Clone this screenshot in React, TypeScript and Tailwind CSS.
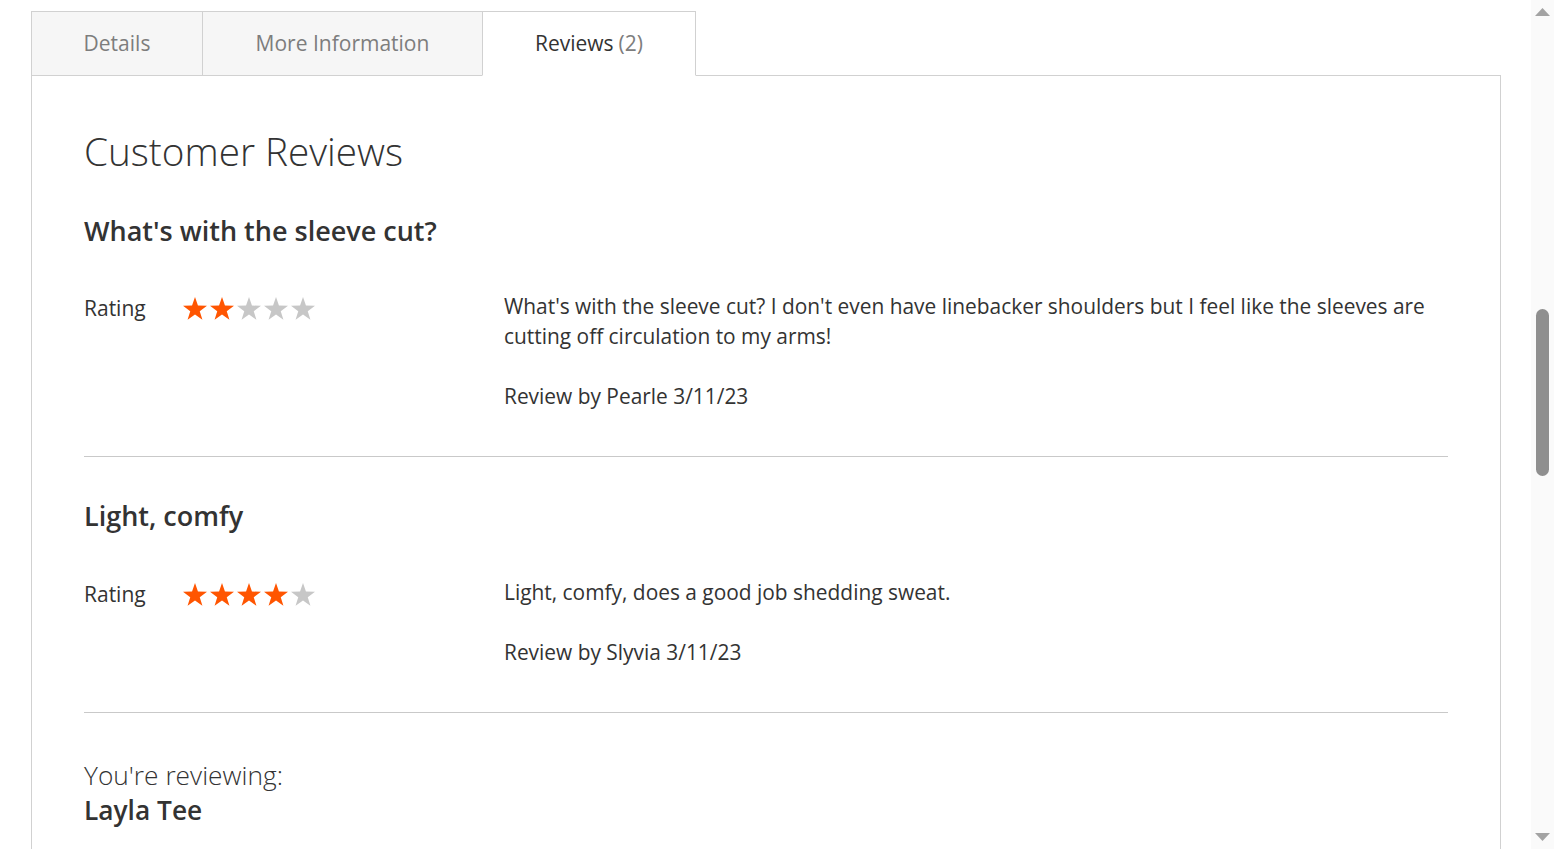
import React from "react";

const STAR = "12,0 14.94,8.57 24,8.72 16.76,14.17 19.42,22.83 12,17.62 4.58,22.83 7.24,14.17 0,8.72 9.06,8.57";

function Stars({ value }: { value: number }) {
  return (
    <div className="flex">
      {[0, 1, 2, 3, 4].map((i) => (
        <svg key={i} width="27" height="23" viewBox="0 0 27 23" className="block">
          <polygon points={STAR} fill={i < value ? "#ff5501" : "#c7c7c7"} />
        </svg>
      ))}
    </div>
  );
}

function Review({
  title,
  rating,
  text,
  by,
  titleTop,
  rowTop,
}: {
  title: string;
  rating: number;
  text: string;
  by: string;
  titleTop: string;
  rowTop: string;
}) {
  return (
    <div className={`border-b border-[#c9c9c9] pb-[45px] ${titleTop}`}>
      <div className="text-[27px] font-semibold leading-[36px] text-[#333]">{title}</div>
      <div className={`grid grid-cols-[420px_1fr] ${rowTop}`}>
        <div className="flex h-[30px] items-center pt-[4px]">
          <span className="w-[99px] text-[21px] leading-[30px] text-[#333]">Rating</span>
          <Stars value={rating} />
        </div>
        <div className="text-[20.9px] leading-[30px] text-[#333]">
          <p>{text}</p>
          <p className="mt-[30px]">{by}</p>
        </div>
      </div>
    </div>
  );
}

export default function App() {
  return (
    <div className="flex h-[849px] w-full overflow-hidden bg-white font-['Open_Sans',sans-serif] text-[#333]">
      <div className="flex-1 pl-[31px] pr-[30px] pt-[11px]">
        <div className="flex">
          <div className="flex h-[65px] w-[172px] items-center justify-center border border-[#d1d1d1] bg-[#f6f6f6] text-[21px] text-[#7d7d7d]">
            Details
          </div>
          <div className="-ml-px flex h-[65px] w-[281px] items-center justify-center border border-[#d1d1d1] bg-[#f6f6f6] text-[21px] text-[#7d7d7d]">
            More Information
          </div>
          <div className="relative z-10 -ml-px flex h-[65px] w-[214px] items-center justify-center border border-[#d1d1d1] border-b-white bg-white text-[21px] text-[#333]">
            Reviews<span className="ml-[5px] text-[#7d7d7d]">(2)</span>
          </div>
        </div>
        <div className="-mt-px h-[900px] border border-[#d1d1d1] px-[52px] pt-[52px]">
          <div className="text-[38.7px] font-light leading-[46px] text-[#333]">Customer Reviews</div>
          <Review
            titleTop="mt-[39px]"
            rowTop="mt-[42px]"
            title="What's with the sleeve cut?"
            rating={2}
            text="What's with the sleeve cut? I don't even have linebacker shoulders but I feel like the sleeves are cutting off circulation to my arms!"
            by="Review by Pearle 3/11/23"
          />
          <Review
            titleTop="pt-[41px]"
            rowTop="mt-[43px]"
            title="Light, comfy"
            rating={4}
            text="Light, comfy, does a good job shedding sweat."
            by="Review by Slyvia 3/11/23"
          />
          <div className="pt-[45px]">
            <div className="text-[26.3px] font-light leading-[35px] text-[#333]">You're reviewing:</div>
            <div className="text-[26.3px] font-semibold leading-[35px] text-[#333]">Layla Tee</div>
          </div>
        </div>
      </div>
      <div className="flex w-[23px] flex-col items-center bg-[#fafafa]">
        <svg width="15" height="8" viewBox="0 0 15 8" className="mt-[8px] block">
          <polygon points="7.5,0 15,8 0,8" fill="#a3a3a3" />
        </svg>
        <div className="mt-[293px] h-[167px] w-[13px] rounded-full bg-[#8f8f8f]" />
        <div className="flex-1" />
        <svg width="15" height="8" viewBox="0 0 15 8" className="mb-[8px] block">
          <polygon points="0,0 15,0 7.5,8" fill="#a3a3a3" />
        </svg>
      </div>
    </div>
  );
}
